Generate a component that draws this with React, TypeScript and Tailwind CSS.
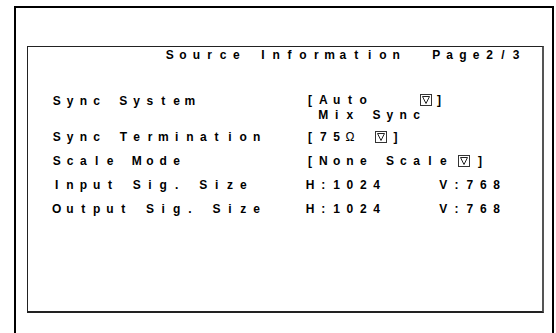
import React from 'react';

// OSD style text: every character sits in a fixed-width cell
const Osd: React.FC<{ text: string }> = ({ text }) => (
  <>
    {[...text].map((c, i) => (
      <span key={i} className={`inline-block w-[13.33px] text-center ${c === 'Ω' ? 'font-normal' : ''}`}>
        {c === ' ' ? '\u00a0' : c}
      </span>
    ))}
  </>
);

const DropBox: React.FC<{ className?: string }> = ({ className }) => (
  <svg width="12" height="12" viewBox="0 0 12 12" className={className}>
    <rect x="0.5" y="0.5" width="11" height="11" fill="none" stroke="#333" />
    <path d="M2.5 2.5 H9.5 L6 9.5 Z" fill="none" stroke="#222" />
  </svg>
);

const Row: React.FC<{ label: string; children: React.ReactNode }> = ({ label, children }) => (
  <div className="flex">
    <div className="flex w-[253.3px] leading-6">
      <Osd text={label} />
    </div>
    <div className="flex flex-col">{children}</div>
  </div>
);

export default function App() {
  return (
    <div
      className="w-[556px] h-[333px] overflow-hidden bg-white pl-[14px] pt-[6px] text-black text-[12px] font-bold"
      style={{ fontFamily: '"Liberation Sans", Arial, sans-serif' }}
    >
      <div className="w-[540px] h-[360px] border-2 border-black pl-[11px] pt-[38px]">
        <div className="w-[517px] h-[267px] border-l border-t border-[#222] border-r-2 border-r-[#555] border-b-2 border-b-[#222] pl-[22px]">
          <div className="flex leading-4 pl-[113px]">
            <Osd text="Source Information  Page2/3" />
          </div>

          <div className="mt-[26px]">
            <Row label="Sync System">
              <div className="flex flex-col pt-[5px] pb-[4px]">
                <div className="flex items-center h-3 leading-3">
                  <Osd text="[Auto" />
                  <DropBox className="ml-[50px]" />
                  <span className="ml-[5px]">]</span>
                </div>
                <div className="flex h-3 leading-3 mt-[3px]">
                  <span className="inline-block w-[13.33px]" />
                  <Osd text="Mix Sync" />
                </div>
              </div>
            </Row>
            <Row label="Sync Termination">
              <div className="flex items-center leading-6">
                <Osd text="[75Ω" />
                <DropBox className="ml-[18px]" />
                <span className="ml-[7px]">]</span>
              </div>
            </Row>
            <Row label="Scale Mode">
              <div className="flex items-center leading-6">
                <Osd text="[None Scale" />
                <DropBox className="ml-[8px]" />
                <span className="ml-[8px]">]</span>
              </div>
            </Row>
            <Row label="Input Sig. Size">
              <div className="flex leading-6">
                <Osd text="H:1024    V:768" />
              </div>
            </Row>
            <Row label="Output Sig. Size">
              <div className="flex leading-6">
                <Osd text="H:1024    V:768" />
              </div>
            </Row>
          </div>
        </div>
      </div>
    </div>
  );
}
